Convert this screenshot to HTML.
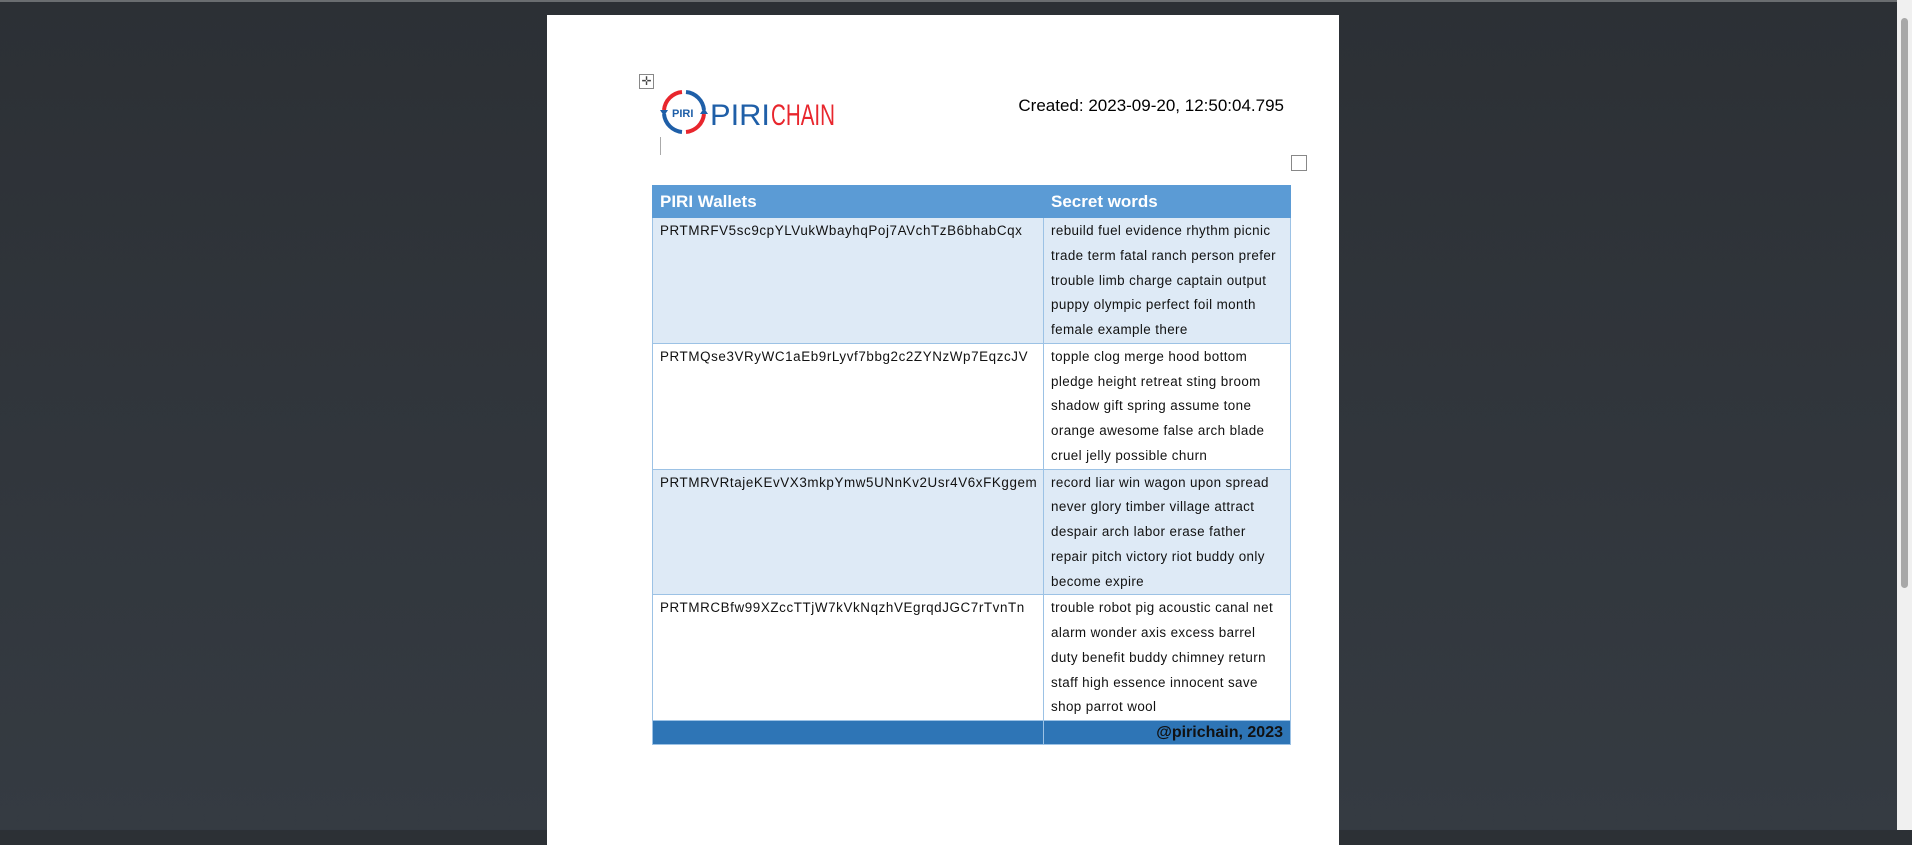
<!DOCTYPE html>
<html><head><meta charset="utf-8"><style>
body{margin:0;width:1912px;height:830px;overflow:hidden;background:linear-gradient(180deg,#2c3035,#353b42);font-family:"Liberation Sans",sans-serif;position:relative}
.top{position:absolute;left:0;top:0;width:1912px;height:2px;background:#6a6d70}
.sb{position:absolute;right:0;top:0;width:15px;height:830px;background:#f0f0f0}
.sb .th{position:absolute;left:4px;top:18px;width:7px;height:570px;background:#a8a8a8;border-radius:4px}
.page{position:absolute;left:547px;top:15px;width:792px;height:830px;background:#fff}
.handle{position:absolute;left:639px;top:74px;width:13px;height:13px;border:1px solid #888;font-size:12px;line-height:13px;text-align:center;color:#444}
.created{position:absolute;right:628px;top:96px;font-size:17px;color:#000}
.cursor{position:absolute;left:660px;top:137px;width:1px;height:18px;background:#aaa}
.chk{position:absolute;left:1291px;top:155px;width:14px;height:14px;border:1px solid #888}
table{position:absolute;left:652px;top:185px;border-collapse:collapse;width:638px;table-layout:fixed;font-size:13.4px;color:#111}
td,th{border:1px solid #9cc2e5;padding:1px 7px 0;vertical-align:top;text-align:left;line-height:24.75px;white-space:nowrap;overflow:hidden}
td:first-child{letter-spacing:0.6px}
td:nth-child(2){letter-spacing:0.4px}
th{background:#5b9bd5;color:#fff;font-size:17px;height:31px;line-height:31px;padding-top:0;border-color:#5b9bd5}
tr.s td{background:#deeaf6}
tr.f td{background:#2e75b6;height:23px;line-height:23px;padding-top:0;font-weight:bold;font-size:16px;text-align:right;color:#111;letter-spacing:0}
</style></head><body>
<div class="top"></div>
<div class="page"></div>
<div class="handle">✛</div>
<svg style="position:absolute;left:660px;top:88px" width="180" height="48" viewBox="0 0 180 48">
<path d="M22 4 A20 20 0 0 0 4 22" stroke="#e8262d" stroke-width="4" fill="none"/>
<path d="M26 4 A20 20 0 0 1 44 22" stroke="#1f5fa8" stroke-width="4" fill="none"/>
<path d="M44 26 A20 20 0 0 1 26 44" stroke="#e8262d" stroke-width="4" fill="none"/>
<path d="M22 44 A20 20 0 0 1 4 26" stroke="#1f5fa8" stroke-width="4" fill="none"/>
<path d="M0 22 L8 22 L4 28Z M48 26 L40 26 L44 20Z" fill="#1f5fa8"/>
<text x="12" y="29" font-family="Liberation Sans" font-size="11" font-weight="bold" fill="#1f5fa8">PIRI</text>
<text x="50" y="37" font-family="Liberation Sans" font-size="30" fill="#1f5fa8" textLength="60" lengthAdjust="spacingAndGlyphs">PIRI</text>
<text x="111" y="37" font-family="Liberation Sans" font-size="30" fill="#e8262d" textLength="64" lengthAdjust="spacingAndGlyphs">CHAIN</text>
</svg>
<div class="created">Created: 2023-09-20, 12:50:04.795</div>
<div class="cursor"></div>
<div class="chk"></div>
<table>
<colgroup><col style="width:391px"><col style="width:247px"></colgroup>
<tr><th>PIRI Wallets</th><th>Secret words</th></tr>
<tr class="s"><td>PRTMRFV5sc9cpYLVukWbayhqPoj7AVchTzB6bhabCqx</td><td>rebuild fuel evidence rhythm picnic<br>trade term fatal ranch person prefer<br>trouble limb charge captain output<br>puppy olympic perfect foil month<br>female example there</td></tr>
<tr><td>PRTMQse3VRyWC1aEb9rLyvf7bbg2c2ZYNzWp7EqzcJV</td><td>topple clog merge hood bottom<br>pledge height retreat sting broom<br>shadow gift spring assume tone<br>orange awesome false arch blade<br>cruel jelly possible churn</td></tr>
<tr class="s"><td>PRTMRVRtajeKEvVX3mkpYmw5UNnKv2Usr4V6xFKggem</td><td>record liar win wagon upon spread<br>never glory timber village attract<br>despair arch labor erase father<br>repair pitch victory riot buddy only<br>become expire</td></tr>
<tr><td>PRTMRCBfw99XZccTTjW7kVkNqzhVEgrqdJGC7rTvnTn</td><td>trouble robot pig acoustic canal net<br>alarm wonder axis excess barrel<br>duty benefit buddy chimney return<br>staff high essence innocent save<br>shop parrot wool</td></tr>
<tr class="f"><td></td><td>@pirichain, 2023</td></tr>
</table>
<div class="sb"><div class="th"></div></div>
</body></html>
